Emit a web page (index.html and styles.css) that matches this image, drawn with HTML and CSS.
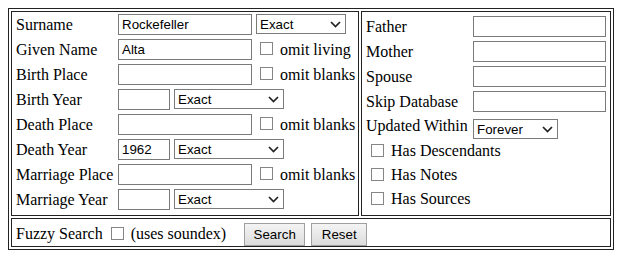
FILE: index.html
```html
<!DOCTYPE html>
<html>
<head>
  <meta charset="utf-8" />
  <title>Search</title>
  <link rel="stylesheet" href="styles.css">
</head>
<body>
  <table class="search">
    <tr>
      <td class="panel panel-left">
        <table class="fields">
          <colgroup>
            <col class="c-label">
            <col class="c-input">
            <col class="c-extra">
          </colgroup>
          <tr>
            <td class="lbl">Surname</td>
            <td><input type="text" class="text" value="Rockefeller"></td>
            <td><select class="sel sel-name"><option>Exact</option></select></td>
          </tr>
          <tr>
            <td class="lbl">Given Name</td>
            <td><input type="text" class="text" value="Alta"></td>
            <td class="note"><label><input type="checkbox" class="chk"> omit living</label></td>
          </tr>
          <tr>
            <td class="lbl">Birth Place</td>
            <td><input type="text" class="text"></td>
            <td class="note"><label><input type="checkbox" class="chk"> omit blanks</label></td>
          </tr>
          <tr>
            <td class="lbl">Birth Year</td>
            <td colspan="2"><input type="text" class="year"> <select class="sel sel-year"><option>Exact</option></select></td>
          </tr>
          <tr>
            <td class="lbl">Death Place</td>
            <td><input type="text" class="text"></td>
            <td class="note"><label><input type="checkbox" class="chk"> omit blanks</label></td>
          </tr>
          <tr>
            <td class="lbl">Death Year</td>
            <td colspan="2"><input type="text" class="year" value="1962"> <select class="sel sel-year"><option>Exact</option></select></td>
          </tr>
          <tr>
            <td class="lbl">Marriage Place</td>
            <td><input type="text" class="text"></td>
            <td class="note"><label><input type="checkbox" class="chk"> omit blanks</label></td>
          </tr>
          <tr>
            <td class="lbl">Marriage Year</td>
            <td colspan="2"><input type="text" class="year"> <select class="sel sel-year"><option>Exact</option></select></td>
          </tr>
        </table>
      </td>
      <td class="panel panel-right">
        <table class="fields">
          <colgroup>
            <col class="c-rlabel">
            <col class="c-rinput">
          </colgroup>
          <tr>
            <td class="lbl">Father</td>
            <td><input type="text" class="text text-r"></td>
          </tr>
          <tr>
            <td class="lbl">Mother</td>
            <td><input type="text" class="text text-r"></td>
          </tr>
          <tr>
            <td class="lbl">Spouse</td>
            <td><input type="text" class="text text-r"></td>
          </tr>
          <tr>
            <td class="lbl">Skip Database</td>
            <td><input type="text" class="text text-r"></td>
          </tr>
          <tr class="upd">
            <td class="lbl">Updated Within</td>
            <td><select class="sel sel-upd"><option>Forever</option></select></td>
          </tr>
          <tr class="opt">
            <td colspan="2"><label class="opt-line"><input type="checkbox" class="chk"> Has Descendants</label></td>
          </tr>
          <tr class="opt">
            <td colspan="2"><label class="opt-line"><input type="checkbox" class="chk"> Has Notes</label></td>
          </tr>
          <tr class="opt">
            <td colspan="2"><label class="opt-line"><input type="checkbox" class="chk"> Has Sources</label></td>
          </tr>
        </table>
      </td>
    </tr>
    <tr>
      <td colspan="2" class="panel fuzzy">
        Fuzzy Search <input type="checkbox" class="chk"> (uses soundex)<button class="btn btn-search">Search</button><button class="btn btn-reset">Reset</button>
      </td>
    </tr>
  </table>
</body>
</html>
```

FILE: styles.css
```css
body {
  margin: 8px;
  font-family: "Liberation Serif", "Times New Roman", serif;
  font-size: 16px;
  color: #000;
  background: #fff;
}

.search {
  border: 1px solid #222;
  border-spacing: 2px;
}

.panel {
  border: 1px solid #222;
  padding: 0;
  vertical-align: top;
}

.panel-left {
  width: 346px;
}

.panel-right {
  width: 248px;
  padding-top: 2px;
  padding-bottom: 1px;
}

.fields {
  border-spacing: 0;
  table-layout: fixed;
  width: 100%;
}

.c-label { width: 104px; }
.c-input { width: 138px; }
.c-extra { width: 104px; }
.c-rlabel { width: 109px; }
.c-rinput { width: 139px; }

.fields td {
  padding: 2px;
  vertical-align: top;
  white-space: nowrap;
  line-height: 16px;
}

.fields td.lbl {
  padding: 5px 2px 0 4px;
}

.fields td.note {
  padding-top: 5px;
  padding-bottom: 0;
}

.text, .year {
  box-sizing: border-box;
  height: 21px;
  margin: 0;
  padding: 0 3px;
  border: 1px solid #7a7a7a;
  border-radius: 0;
  font-family: "Liberation Sans", Arial, sans-serif;
  font-size: 13.33px;
  color: #000;
  background: #fff;
  vertical-align: top;
}

.text { width: 134px; }
.text-r { width: 133px; }
.year { width: 52px; }

.sel {
  box-sizing: border-box;
  height: 20px;
  margin: 0;
  padding: 0 18px 0 3px;
  border: 1px solid #7a7a7a;
  border-radius: 0;
  font-family: "Liberation Sans", Arial, sans-serif;
  font-size: 13.33px;
  color: #000;
  vertical-align: top;
  -webkit-appearance: none;
  appearance: none;
  background: #fff url("data:image/svg+xml,%3Csvg xmlns='http://www.w3.org/2000/svg' width='11' height='7' viewBox='0 0 11 7'%3E%3Cpath d='M1 1l4.5 4.5L10 1' fill='none' stroke='%23222' stroke-width='1.7'/%3E%3C/svg%3E") no-repeat right 4px center;
}

.sel-name { width: 90px; }
.sel-year { width: 110px; }
.sel-upd { width: 85px; }

.chk {
  -webkit-appearance: none;
  appearance: none;
  box-sizing: border-box;
  width: 13px;
  height: 13px;
  margin: 0 3px 0 4px;
  border: 1px solid #858585;
  background: #fff;
  vertical-align: 0;
}

.fields tr.upd td {
  height: 23px;
  padding-top: 5px;
  padding-bottom: 0;
}

.fields tr.upd td.lbl {
  padding-top: 4px;
}

.fields tr.opt td {
  height: 24px;
  padding: 0;
}

.opt-line {
  display: block;
  padding: 1px 0 0 9px;
}

.opt-line .chk {
  margin-left: 0;
  vertical-align: -1px;
}

.fuzzy {
  height: 29px;
  box-sizing: border-box;
  padding: 4px 0 0 4px;
  line-height: 16px;
  white-space: nowrap;
}

.fuzzy .chk {
  vertical-align: -1px;
}

.btn {
  box-sizing: border-box;
  height: 23px;
  margin: 0;
  padding: 0;
  border: 1px solid #a0a0a0;
  border-radius: 0;
  background: linear-gradient(#f4f4f4, #dcdcdc);
  font-family: "Liberation Sans", Arial, sans-serif;
  font-size: 13.33px;
  color: #000;
  vertical-align: baseline;
  cursor: pointer;
}

.btn-search {
  width: 61px;
  margin-left: 18px;
}

.btn-reset {
  width: 56px;
  margin-left: 6px;
}

.btn:hover {
  background: linear-gradient(#f8f8f8, #e4e4e4);
}
```
